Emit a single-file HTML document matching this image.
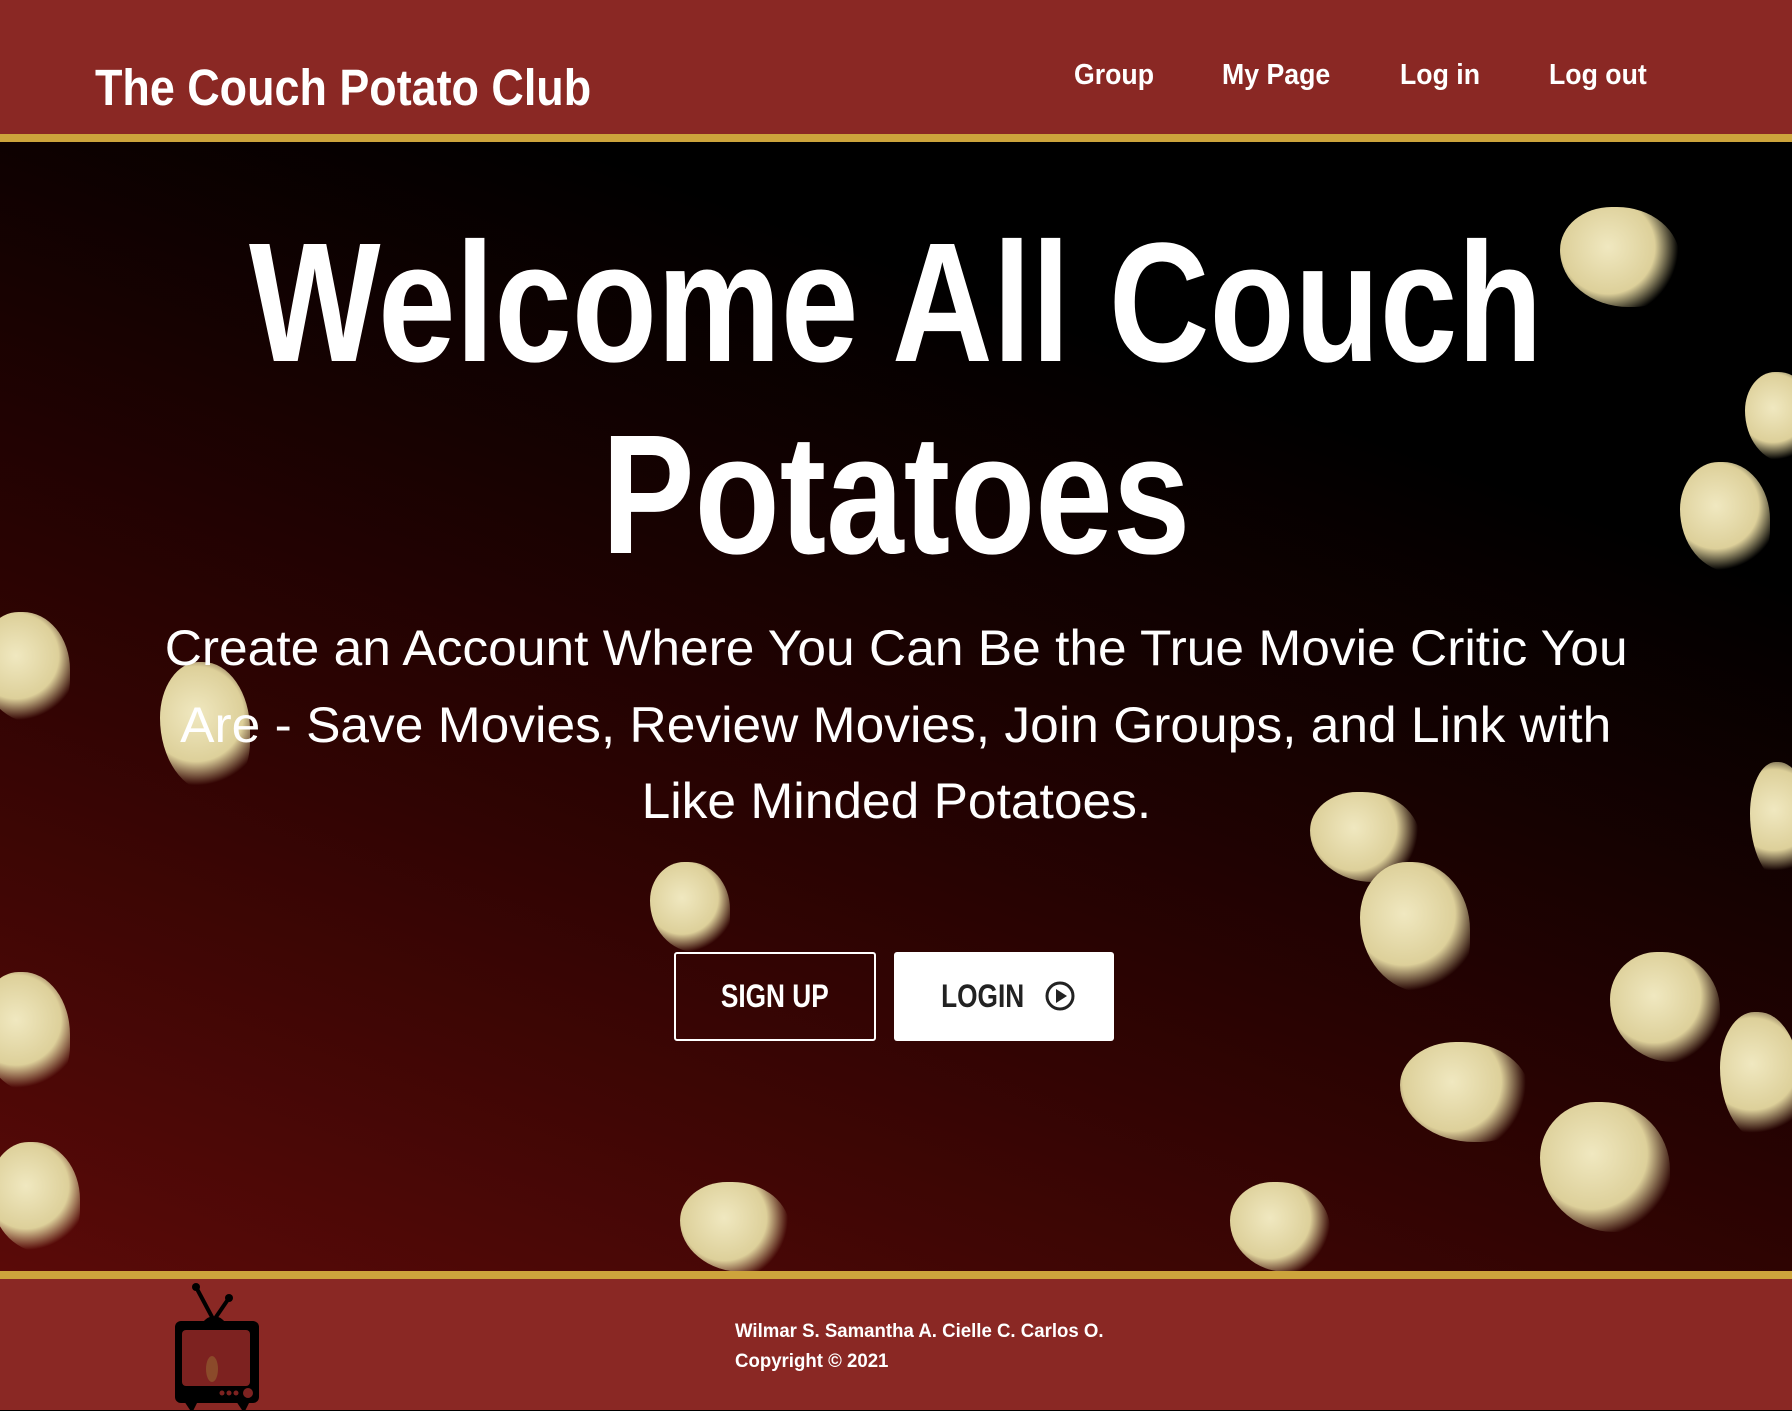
<!DOCTYPE html>
<html><head><meta charset="utf-8"><style>
*{margin:0;padding:0;box-sizing:border-box}
body{width:1792px;height:1410px;overflow:hidden;font-family:"Liberation Sans",sans-serif;background:#000;position:relative}
.hdr{position:absolute;left:0;top:0;width:1792px;background:#8a2824;border-bottom:8px solid #cda43c;height:142px}
.t{position:absolute;white-space:nowrap;color:#fff;font-weight:bold;transform-origin:left center}
.hero{position:absolute;left:0;top:142px;width:1792px;height:1129px;background:linear-gradient(20deg,#5a0a08 0%,#2a0302 40%,#000 75%);overflow:hidden}
.pc{position:absolute;border-radius:45% 55% 40% 60%;background:radial-gradient(circle at 40% 40%,#f0e8c0 0%,#ddd09a 50%,rgba(160,130,80,0) 75%)}
.c{position:absolute;left:0;width:1792px;text-align:center;color:#fff;white-space:nowrap}
.c span{display:inline-block;transform-origin:center}
.ftr{position:absolute;left:0;top:1271px;width:1792px;height:139px;background:#8a2824;border-top:8px solid #cda43c}
</style></head><body>
<div class="hdr">
<span class="t" style="left:95px;top:58px;font-size:51px;line-height:60px;transform:scaleX(0.88)">The Couch Potato Club</span>
<span class="t" style="left:1074px;top:58px;font-size:29px;line-height:34px;transform:scaleX(0.92)">Group</span>
<span class="t" style="left:1222px;top:58px;font-size:29px;line-height:34px;transform:scaleX(0.92)">My Page</span>
<span class="t" style="left:1400px;top:58px;font-size:29px;line-height:34px;transform:scaleX(0.92)">Log in</span>
<span class="t" style="left:1549px;top:58px;font-size:29px;line-height:34px;transform:scaleX(0.92)">Log out</span>
</div>
<div class="hero">
<div class="pc" style="left:1560px;top:65px;width:120px;height:100px"></div>
<div class="pc" style="left:1745px;top:230px;width:70px;height:90px"></div>
<div class="pc" style="left:1680px;top:320px;width:90px;height:110px"></div>
<div class="pc" style="left:-20px;top:470px;width:90px;height:110px"></div>
<div class="pc" style="left:160px;top:520px;width:90px;height:130px"></div>
<div class="pc" style="left:1310px;top:650px;width:110px;height:90px"></div>
<div class="pc" style="left:1360px;top:720px;width:110px;height:130px"></div>
<div class="pc" style="left:1750px;top:620px;width:60px;height:120px"></div>
<div class="pc" style="left:650px;top:720px;width:80px;height:90px"></div>
<div class="pc" style="left:-20px;top:830px;width:90px;height:120px"></div>
<div class="pc" style="left:1610px;top:810px;width:110px;height:110px"></div>
<div class="pc" style="left:1720px;top:870px;width:80px;height:130px"></div>
<div class="pc" style="left:1400px;top:900px;width:130px;height:100px"></div>
<div class="pc" style="left:1540px;top:960px;width:130px;height:130px"></div>
<div class="pc" style="left:-10px;top:1000px;width:90px;height:110px"></div>
<div class="pc" style="left:680px;top:1040px;width:110px;height:90px"></div>
<div class="pc" style="left:1230px;top:1040px;width:100px;height:90px"></div>
</div>
<div class="c" style="top:208px;font-size:170px;line-height:190px;font-weight:bold"><span style="transform:scaleX(0.82)">Welcome All Couch</span></div>
<div class="c" style="top:400px;font-size:170px;line-height:190px;font-weight:bold"><span style="transform:scaleX(0.82)">Potatoes</span></div>
<div class="c" style="top:618px;font-size:50px;line-height:60px"><span style="transform:scaleX(1.03)">Create an Account Where You Can Be the True Movie Critic You</span></div>
<div class="c" style="top:695px;font-size:50px;line-height:60px"><span style="transform:scaleX(1.03)">Are - Save Movies, Review Movies, Join Groups, and Link with</span></div>
<div class="c" style="top:771px;font-size:50px;line-height:60px"><span style="transform:scaleX(1.03)">Like Minded Potatoes.</span></div>
<div style="position:absolute;left:674px;top:952px;width:202px;height:89px;border:2px solid #fff;border-radius:3px;color:#fff;font-weight:bold;font-size:32px;line-height:85px;text-align:center"><span style="display:inline-block;transform:scaleX(0.82)">SIGN UP</span></div>
<div style="position:absolute;left:894px;top:952px;width:220px;height:89px;background:#fff;border-radius:3px;color:#222;font-weight:bold;font-size:32px;line-height:89px;text-align:center;white-space:nowrap"><span style="display:inline-block;transform:scaleX(0.82);vertical-align:top">LOGIN</span>
<svg width="32" height="32" viewBox="0 0 32 32" style="vertical-align:middle;margin-left:2px;margin-top:-6px"><circle cx="16" cy="16" r="13" fill="none" stroke="#222" stroke-width="3"/><path d="M12 9 L23 16 L12 23Z" fill="#222"/></svg></div>
<div class="ftr">
<svg style="position:absolute;left:172px;top:2px" width="90" height="130" viewBox="0 0 90 130">
<line x1="24" y1="6" x2="40" y2="36" stroke="#000" stroke-width="4"/><circle cx="24" cy="6" r="4"/><line x1="57" y1="17" x2="44" y2="36" stroke="#000" stroke-width="4"/><circle cx="57" cy="17" r="4"/>
<path d="M30 42 Q42 28 54 42Z"/>
<rect x="3" y="40" width="84" height="82" rx="6"/>
<path d="M12 120 L20 132 L26 120Z M64 120 L72 132 L78 120Z"/>
<rect x="10" y="49" width="68" height="56" rx="4" fill="#7d2220"/>
<ellipse cx="40" cy="88" rx="6" ry="13" fill="#8b4a2a"/>
<circle cx="50" cy="112" r="2.5" fill="#7d2220"/><circle cx="57" cy="112" r="2.5" fill="#7d2220"/><circle cx="64" cy="112" r="2.5" fill="#7d2220"/><circle cx="76" cy="112" r="5" fill="#7d2220"/>
</svg>
<span class="t" style="left:735px;top:42px;font-size:19px;line-height:22px;transform:scaleX(0.98)">Wilmar S. Samantha A. Cielle C. Carlos O.</span>
<span class="t" style="left:735px;top:72px;font-size:19px;line-height:22px;transform:scaleX(0.98)">Copyright © 2021</span>
</div>
</body></html>
